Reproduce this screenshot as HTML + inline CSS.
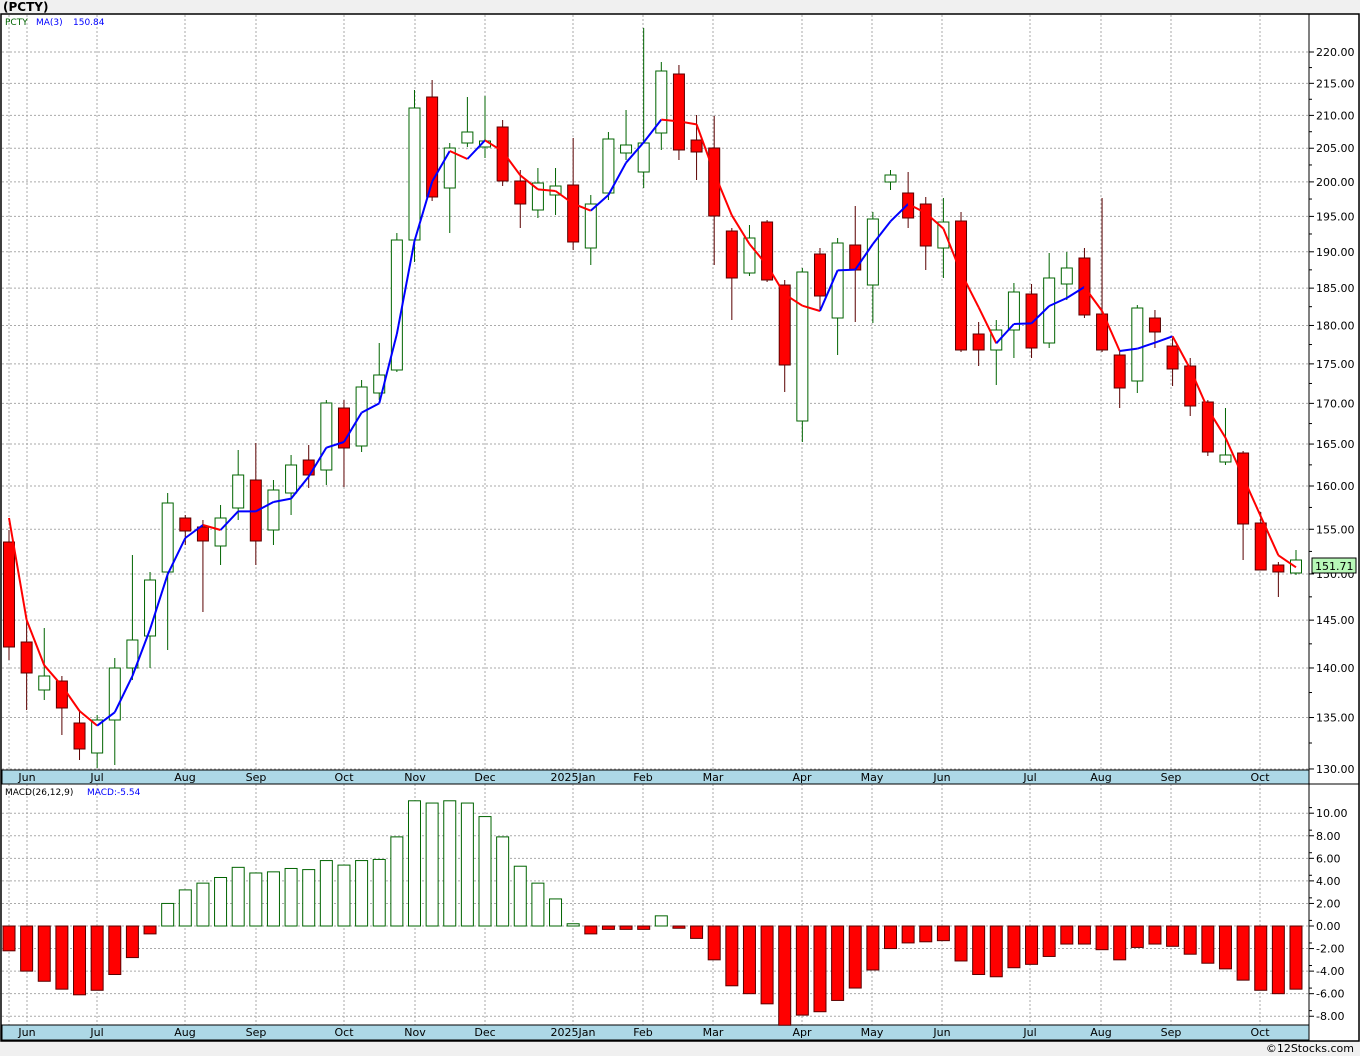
<!DOCTYPE html>
<html><head><meta charset="utf-8"><style>
body{margin:0;background:#f0f0f0;width:1360px;height:1056px;overflow:hidden;font-family:"DejaVu Sans","Liberation Sans",sans-serif}
svg{position:absolute;left:0;top:0}
</style></head><body>
<svg id="s" width="1360" height="1056" xmlns="http://www.w3.org/2000/svg" font-family="DejaVu Sans, Liberation Sans, sans-serif">
<rect x="0" y="0" width="1360" height="1056" fill="#f0f0f0"/>
<rect x="1" y="14" width="1358" height="1027" fill="#fff" stroke="#000" stroke-width="1.5"/>
<text x="3" y="11" font-size="12" font-weight="bold" fill="#000">(PCTY)</text>
<text x="1354" y="1052" font-size="11" text-anchor="end" fill="#000">©12Stocks.com</text>
<g id="g"></g>
</svg>
<script>
const g=document.getElementById('g');let h='';
const months=[["Jun",27],["Jul",97],["Aug",185],["Sep",256],["Oct",344],["Nov",415],["Dec",485],["2025Jan",573],["Feb",643],["Mar",713],["Apr",802],["May",872],["Jun",942],["Jul",1030],["Aug",1101],["Sep",1171],["Oct",1260]];
for(const m of [9,...months.map(a=>a[1])]){h+=`<line x1="${m}" y1="15" x2="${m}" y2="770" stroke="#aaa" stroke-dasharray="2,2"/><line x1="${m}" y1="784" x2="${m}" y2="1025" stroke="#aaa" stroke-dasharray="2,2"/>`;}
const py=p=>52+1362.8*(Math.log(220)-Math.log(p));
for(let p=130;p<=220;p+=5){const y=py(p);h+=`<line x1="2" y1="${y}" x2="1309" y2="${y}" stroke="#aaa" stroke-dasharray="2,2"/><line x1="1309" y1="${y}" x2="1314" y2="${y}" stroke="#000"/><text x="1316" y="${y+4}" font-size="11">${p.toFixed(2)}</text>`;
 const y2=py(p+2.5);if(p<220)h+=`<line x1="1309" y1="${y2}" x2="1312" y2="${y2}" stroke="#000"/>`;}
const my=v=>926-v*11.28;
for(let v=-8;v<=10;v+=2){const y=my(v);h+=`<line x1="2" y1="${y}" x2="1309" y2="${y}" stroke="#aaa" stroke-dasharray="2,2"/><line x1="1309" y1="${y}" x2="1314" y2="${y}" stroke="#000"/><text x="1316" y="${y+4}" font-size="11">${v.toFixed(2)}</text><line x1="1309" y1="${y-5.6}" x2="1312" y2="${y-5.6}" stroke="#000"/>`;}
for(const y of [770,1025]){h+=`<rect x="2" y="${y}" width="1307" height="${y==770?14:15}" fill="#add8e6" stroke="#000"/>`;for(const [t,x] of months)h+=`<text x="${x}" y="${y+11}" font-size="11" text-anchor="middle">${t}</text>`;}
h+=`<line x1="1309" y1="14" x2="1309" y2="1041" stroke="#000"/><line x1="2" y1="784" x2="1359" y2="784" stroke="#000"/>`;
const C=[[542,647,530,660,0],[642,673,620,710,0],[676,690,628,700,1],[681,708,676,735,0],[723,749,710,760,0],[720,753,715,768,1],[668,720,658,765,1],[640,668,555,680,1],[580,636,572,668,1],[503,572,493,650,1],[518,531,515,545,0],[527,541,520,612,0],[518,546,505,565,1],[475,508,450,520,1],[480,541,443,565,0],[490,530,480,545,1],[465,493,455,515,1],[460,475,445,488,0],[403,470,400,485,1],[408,448,400,487,0],[387,446,380,452,1],[375,393,343,400,1],[240,370,233,372,1],[108,240,90,262,1],[97,197,80,201,0],[148,188,143,233,1],[132,143,97,147,1],[141,147,96,158,1],[127,181,120,186,0],[181,204,170,228,0],[183,210,168,218,1],[186,195,168,215,1],[185,242,138,250,0],[204,248,195,265,1],[139,193,132,200,1],[145,153,110,160,1],[143,172,28,188,1],[71,133,62,150,1],[74,150,65,160,0],[140,152,115,180,0],[148,216,116,265,0],[231,278,228,320,0],[238,273,225,276,1],[222,280,220,282,0],[285,365,280,392,0],[272,421,268,442,1],[254,296,248,310,0],[243,318,238,355,1],[245,270,206,322,0],[219,285,212,323,1],[175,182,170,190,1],[193,218,172,228,0],[204,246,197,270,0],[222,248,198,278,1],[221,350,212,352,0],[334,350,322,366,0],[330,350,320,385,1],[292,330,283,358,1],[294,348,284,358,0],[278,343,253,348,1],[268,284,252,300,1],[258,315,248,318,0],[314,350,198,352,0],[355,388,350,408,0],[308,381,305,393,1],[318,332,310,348,0],[346,369,338,386,0],[366,406,358,416,0],[402,452,400,456,0],[455,462,408,465,1],[453,524,451,560,0],[523,570,512,570,0],[565,572,562,597,0],[560,573,550,575,1]];
const X=i=>9+i*17.63;
const cl=C.map(c=>c[4]?c[0]:c[1]);
C.forEach((c,i)=>{const x=X(i);const col=c[4]?'#006400':'#5a0000';
h+=`<line x1="${x}" y1="${c[2]}" x2="${x}" y2="${c[3]}" stroke="${col}"/>`;
h+=`<rect x="${x-5.5}" y="${c[0]}" width="11" height="${Math.max(1,c[1]-c[0])}" fill="${c[4]?'#fff':'#f00'}" stroke="${col}"/>`;});
const ma=cl.map((v,i)=>{const a=cl.slice(Math.max(0,i-2),i+1);return a.reduce((s,x)=>s+x,0)/a.length;});
ma[0]=518;ma[1]=620;
for(let i=1;i<ma.length;i++){const col=ma[i]>ma[i-1]?'#f00':'#0000ff';h+=`<line x1="${X(i-1)}" y1="${ma[i-1]}" x2="${X(i)}" y2="${ma[i]}" stroke="${col}" stroke-width="2"/>`;}
const M=[-2.2,-4,-4.9,-5.6,-6.1,-5.7,-4.3,-2.8,-0.7,2,3.2,3.8,4.3,5.2,4.7,4.8,5.1,5,5.8,5.4,5.8,5.9,7.9,11.1,10.9,11.1,10.9,9.7,7.9,5.3,3.8,2.4,0.2,-0.7,-0.3,-0.3,-0.3,0.9,-0.2,-1.1,-3,-5.3,-6,-6.9,-8.8,-7.9,-7.6,-6.6,-5.5,-3.9,-2,-1.5,-1.4,-1.3,-3.1,-4.3,-4.5,-3.7,-3.4,-2.7,-1.6,-1.6,-2.1,-3,-1.9,-1.6,-1.8,-2.5,-3.3,-3.8,-4.8,-5.7,-6,-5.6];
M.forEach((v,i)=>{const x=X(i);const y=my(v);const t=Math.min(y,926),hh=Math.max(1,Math.abs(y-926));
h+=v>=0?`<rect x="${x-6}" y="${t}" width="12" height="${hh}" fill="#fff" stroke="#006400"/>`:`<rect x="${x-6}" y="${t}" width="12" height="${hh}" fill="#f00" stroke="#5a0000"/>`;});
h+=`<text x="5" y="25" font-size="9" fill="#006400">PCTY</text><text x="36" y="25" font-size="9" fill="#0000ff">MA(3)</text><text x="73" y="25" font-size="9" fill="#0000ff">150.84</text>`;
h+=`<text x="5" y="795" font-size="9" fill="#000">MACD(26,12,9)</text><text x="87" y="795" font-size="9" fill="#0000ff">MACD:-5.54</text>`;
h+=`<rect x="1312" y="558" width="44" height="15" fill="#b8f8b8" stroke="#000"/><text x="1315" y="570" font-size="11">151.71</text>`;
g.innerHTML=h;
</script>
</body></html>
